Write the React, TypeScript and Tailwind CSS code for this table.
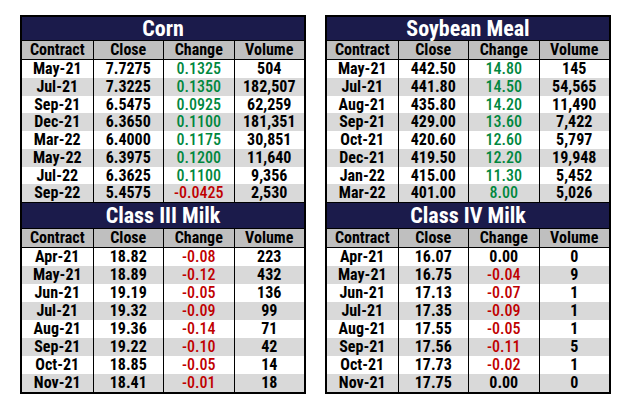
import React from 'react';

type Row = [string, string, string, string];

interface Section {
  title: string;
  rows: Row[];
}

const left: Section[] = [
  {
    title: 'Corn',
    rows: [
      ['May-21', '7.7275', '0.1325', '504'],
      ['Jul-21', '7.3225', '0.1350', '182,507'],
      ['Sep-21', '6.5475', '0.0925', '62,259'],
      ['Dec-21', '6.3650', '0.1100', '181,351'],
      ['Mar-22', '6.4000', '0.1175', '30,851'],
      ['May-22', '6.3975', '0.1200', '11,640'],
      ['Jul-22', '6.3625', '0.1100', '9,356'],
      ['Sep-22', '5.4575', '-0.0425', '2,530'],
    ],
  },
  {
    title: 'Class III Milk',
    rows: [
      ['Apr-21', '18.82', '-0.08', '223'],
      ['May-21', '18.89', '-0.12', '432'],
      ['Jun-21', '19.19', '-0.05', '136'],
      ['Jul-21', '19.32', '-0.09', '99'],
      ['Aug-21', '19.36', '-0.14', '71'],
      ['Sep-21', '19.22', '-0.10', '42'],
      ['Oct-21', '18.85', '-0.05', '14'],
      ['Nov-21', '18.41', '-0.01', '18'],
    ],
  },
];

const right: Section[] = [
  {
    title: 'Soybean Meal',
    rows: [
      ['May-21', '442.50', '14.80', '145'],
      ['Jul-21', '441.80', '14.50', '54,565'],
      ['Aug-21', '435.80', '14.20', '11,490'],
      ['Sep-21', '429.00', '13.60', '7,422'],
      ['Oct-21', '420.60', '12.60', '5,797'],
      ['Dec-21', '419.50', '12.20', '19,948'],
      ['Jan-22', '415.00', '11.30', '5,452'],
      ['Mar-22', '401.00', '8.00', '5,026'],
    ],
  },
  {
    title: 'Class IV Milk',
    rows: [
      ['Apr-21', '16.07', '0.00', '0'],
      ['May-21', '16.75', '-0.04', '9'],
      ['Jun-21', '17.13', '-0.07', '1'],
      ['Jul-21', '17.35', '-0.09', '1'],
      ['Aug-21', '17.55', '-0.05', '1'],
      ['Sep-21', '17.56', '-0.11', '5'],
      ['Oct-21', '17.73', '-0.02', '1'],
      ['Nov-21', '17.75', '0.00', '0'],
    ],
  },
];

const headers = ['Contract', 'Close', 'Change', 'Volume'];

function changeClass(v: string) {
  if (v.startsWith('-')) return 'text-[#c00000] font-medium';
  if (parseFloat(v) > 0) return 'text-[#00873e] font-medium';
  return 'text-black';
}

function Block({ section, first }: { section: Section; first: boolean }) {
  return (
    <div>
      <div
        className={`bg-[#1b1b4b] text-white text-[22px] font-bold text-center border-b border-black ${
          first ? 'h-[24px] leading-[23px]' : 'h-[27px] leading-[25px] border-t'
        }`}
      >
        {section.title}
      </div>
      <div className="grid grid-cols-4 h-[19px] bg-[#bfbfbf] border-b border-black text-[16px] leading-[18px] font-bold">
        {headers.map((h, i) => (
          <div key={h} className={`text-center ${i > 0 ? 'border-l border-black' : ''}`}>
            {h}
          </div>
        ))}
      </div>
      {section.rows.map((r, ri) => (
        <div
          key={ri}
          className={`grid grid-cols-4 text-[16px] font-bold ${
            first ? 'h-[17.75px] leading-[17.75px]' : 'h-[18px] leading-[18px]'
          } ${ri % 2 === 1 ? 'bg-[#d9d9d9]' : 'bg-white'}`}
        >
          {r.map((c, ci) => (
            <div
              key={ci}
              className={`text-center ${ci > 0 ? 'border-l border-black' : ''} ${
                ci === 2 ? changeClass(c) : 'text-black'
              }`}
            >
              {c}
            </div>
          ))}
        </div>
      ))}
    </div>
  );
}

function Table({ sections }: { sections: Section[] }) {
  return (
    <div className="w-[286px] border-2 border-black">
      {sections.map((s, i) => (
        <Block key={s.title} section={s} first={i === 0} />
      ))}
    </div>
  );
}

export default function App() {
  return (
    <div className="w-[632px] h-[409px] bg-white flex items-start gap-[19px] pl-[20px] pt-[15px] font-['Roboto',sans-serif] [font-stretch:condensed]">
      <Table sections={left} />
      <Table sections={right} />
    </div>
  );
}
